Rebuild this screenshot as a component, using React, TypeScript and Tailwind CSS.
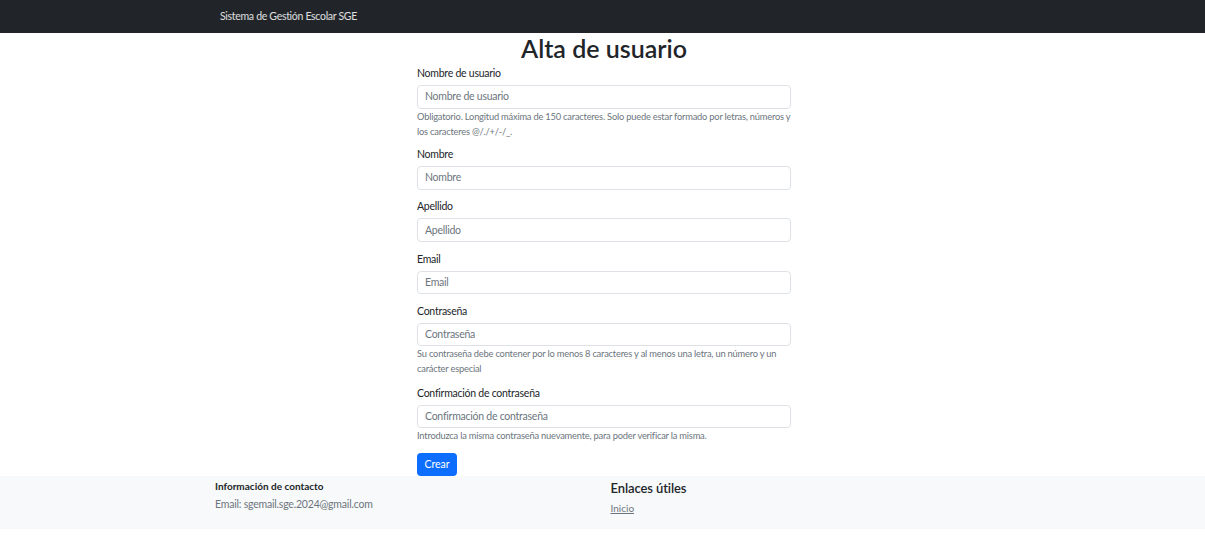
import React from "react";

const font = { fontFamily: "Lato, 'Noto Sans', sans-serif" };

function Field({ label, help, mb }: { label: string; help?: string; mb: string }) {
  return (
    <div className={mb}>
      <div className="text-[10.5px] leading-[16px] mb-[4px] text-[#212529] tracking-[-0.25px]">{label}</div>
      <div className="h-[23.5px] border border-[#dee2e6] rounded-[4px] flex items-center px-[7px] pt-[1px] text-[10.5px] text-[#6c757d] bg-white tracking-[-0.25px]">
        {label}
      </div>
      {help && (
        <div className="text-[9.3px] leading-[15px] text-[#6c757d] tracking-[-0.2px]">{help}</div>
      )}
    </div>
  );
}

export default function App() {
  return (
    <div className="w-[1205px] min-h-[547px] bg-white" style={font}>
      <nav className="h-[33px] bg-[#212529] flex items-center">
        <div className="w-[791px] mx-auto pl-[13px] text-[10.5px] text-white/85 tracking-[-0.3px]">
          Sistema de Gestión Escolar SGE
        </div>
      </nav>
      <main className="w-[374px] ml-[417px]">
        <h1 className="text-[25px] leading-[30px] font-semibold text-center text-[#212529] mb-[2px]">
          Alta de usuario
        </h1>
        <Field
          mb="mb-[7.5px]"
          label="Nombre de usuario"
          help="Obligatorio. Longitud máxima de 150 caracteres. Solo puede estar formado por letras, números y los caracteres @/./+/-/_."
        />
        <Field mb="mb-[8.8px]" label="Nombre" />
        <Field mb="mb-[8.8px]" label="Apellido" />
        <Field mb="mb-[8.8px]" label="Email" />
        <Field
          mb="mb-[8.5px]"
          label="Contraseña"
          help="Su contraseña debe contener por lo menos 8 caracteres y al menos una letra, un número y un carácter especial"
        />
        <Field
          mb="mb-[9.5px]"
          label="Confirmación de contraseña"
          help="Introduzca la misma contraseña nuevamente, para poder verificar la misma."
        />
        <button className="h-[23px] w-[40px] bg-[#0d6efd] text-white text-[10.5px] rounded-[4px] block">
          Crear
        </button>
      </main>
      <footer className="h-[53px] bg-[#f8f9fa]">
        <div className="w-[791px] mx-auto flex">
          <div className="w-1/2 px-[8px] pt-[2px]">
            <div className="text-[10px] leading-[16px] font-bold text-[#212529]">Información de contacto</div>
            <div className="mt-[2px] text-[10.5px] leading-[16px] text-[#6c757d] tracking-[-0.2px]">Email: sgemail.sge.2024@gmail.com</div>
          </div>
          <div className="w-1/2 px-[8px] pt-[4px]">
            <div className="text-[13px] leading-[16px] font-semibold text-[#212529] tracking-[-0.1px]">Enlaces útiles</div>
            <div className="mt-[4px] text-[10px] leading-[16px] text-[#6c757d] underline">Inicio</div>
          </div>
        </div>
      </footer>
    </div>
  );
}
